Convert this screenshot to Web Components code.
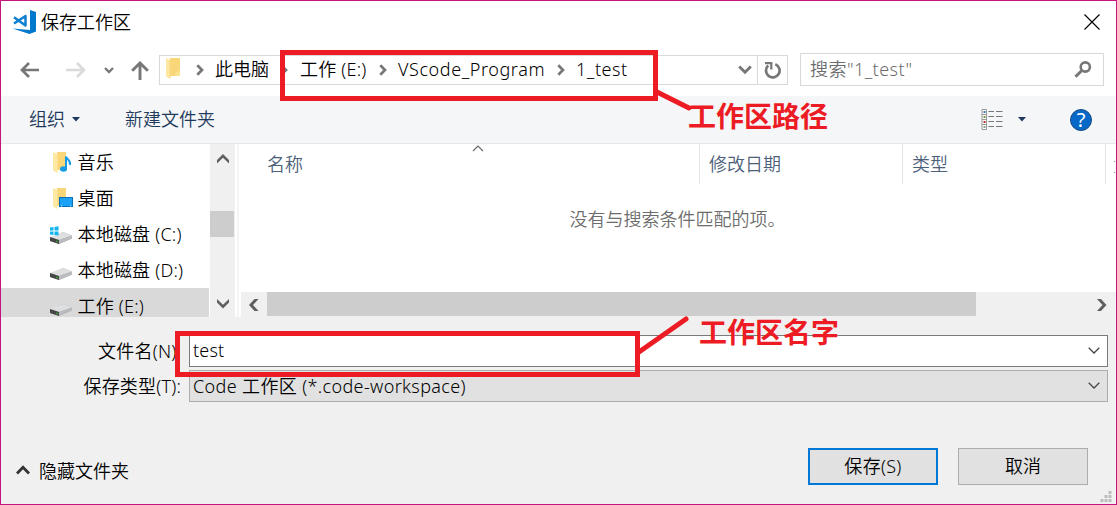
<!DOCTYPE html>
<html lang="zh-CN">
<head>
<meta charset="utf-8">
<title>保存工作区</title>
<style>
html,body{margin:0;height:100%;overflow:hidden}
body{font:350 18px/24px "Noto Sans","Noto Sans CJK SC",sans-serif;color:#000}
</style>
</head>
<body>
<save-dialog></save-dialog>
<script>
const define=(name,css,html)=>customElements.define(name,class extends HTMLElement{
  constructor(){
    super();
    this.attachShadow({mode:'open'}).innerHTML=`<style>*{box-sizing:border-box}svg{display:block;flex:none}${css}</style>${html}`;
  }
});

const icons={
  vscode:['0 0 24 24',`<path d="M18 0L24 2V21.500L17.500 24L.5 18.500L18 20Z" fill="#0078cc"/><path d="M2 7.200L13.500 15.500V6L2 13.500" fill="none" stroke="#0e80d2" stroke-width="2.500" stroke-linejoin="round"/>`],
  close:['0 0 16 16',`<path d="M.5.5L15.500 15.500M15.500.5L.5 15.500" stroke="#000" stroke-width="1.150" fill="none"/>`],
  back:['0 0 20 16',`<path d="M19 8H2M9 1L2 8L9 15" fill="none" stroke="#777" stroke-width="2.700"/>`],
  forward:['0 0 20 16',`<path d="M0 8H18M11 1L18 8L11 15" fill="none" stroke="#dadada" stroke-width="2.600"/>`],
  up:['0 0 18 19',`<path d="M9 19V2M1.200 9.800L9 2L16.800 9.800" fill="none" stroke="#777" stroke-width="2.900"/>`],
  small:['0 0 10 7',`<path d="M1 1L5 5L9 1" fill="none" stroke="#777" stroke-width="2.300"/>`],
  crumb:['0 0 8 12',`<path d="M1.300 1.200L6 6L1.300 10.800" fill="none" stroke="#777" stroke-width="2.700"/>`],
  chevron:['0 0 14 10',`<path d="M1.200 1.500L7 7.300L12.800 1.500" fill="none" stroke="#777" stroke-width="2.900"/>`],
  refresh:['0 0 17 17',`<path d="M4.200 3.600A6.800 6.800 0 1 0 11.300 2.300" fill="none" stroke="#777" stroke-width="2.700"/><path d="M1 1.200H7.300V7.500" fill="none" stroke="#777" stroke-width="2.200"/>`],
  search:['0 0 18 17',`<circle cx="11.300" cy="6" r="4.600" fill="none" stroke="#777" stroke-width="2.600"/><path d="M8 9.300L1.500 15.800" stroke="#777" stroke-width="3"/>`],
  folder:['0 0 15 21',`<path d="M4 0H14V18H4Z" fill="#f9d778"/><path d="M10 15L14 12V18H8Z" fill="#fbe294"/><path d="M0 0L4.500 2V21L0 18.500Z" fill="#ffe9a2"/><path d="M4 2V20" stroke="#f0c75e" stroke-width=".6"/>`],
  music:['0 0 22 22',`<path d="M4 0H13V18H4Z" fill="#f9d778"/><path d="M0 0L4.500 2V21L0 18.500Z" fill="#ffe9a2"/><path d="M13 17V4.500C14 8 18 8 17 13" fill="none" stroke="#169be6" stroke-width="2"/><ellipse cx="10.500" cy="17" rx="3.500" ry="2.700" fill="#169be6"/>`],
  desktop:['0 0 22 22',`<path d="M4 0H13V18H4Z" fill="#f9d778"/><path d="M0 0L4.500 2V21L0 18.500Z" fill="#ffe9a2"/><rect x="6.500" y="9.500" width="13" height="9" fill="#1ba1f5" stroke="#086fb9"/><path d="M8 18H18" stroke="#dff4ff" stroke-dasharray="1 8"/>`],
  drive:['0 0 22 12',`<path d="M0 6L13 0L22 3.500V6.500L9 12L0 9Z" fill="#a9abad"/><path d="M0 5L13 0L22 3.500L9 8Z" fill="#dedfe1"/><path d="M0 5L9 8V12L0 9Z" fill="#454746"/><path d="M9 8L22 3.500V6.500L9 12Z" fill="#b9bbbd"/><path d="M6 8.500L8 9.200V10.500L6 10Z" fill="#38a03d"/>`],
  winDrive:['0 0 22 18',`<path d="M0 12L13 6L22 9.500V12.500L9 18L0 15Z" fill="#a9abad"/><path d="M0 11L13 6L22 9.500L9 14Z" fill="#dedfe1"/><path d="M0 11L9 14V18L0 15Z" fill="#454746"/><path d="M9 14L22 9.500V12.500L9 18Z" fill="#b9bbbd"/><path d="M6 14.500L8 15.200V16.500L6 16Z" fill="#38a03d"/><path d="M0 1.500L3.500 1V4.500H0ZM4.500.9L8.500.3V4.500H4.500ZM0 5.500H3.500V9L0 8.500ZM4.500 5.500H8.500V9.500L4.500 9Z" fill="#10b5ef"/>`],
  caret:['0 0 8 5',`<path d="M0 0H8L4 4.500Z" fill="#1e395b"/>`],
  list:['0 0 22 22',`<path d="M1 .5H5.500V20.500H1ZM1 5.500H5.500M1 10.500H5.500M1 15.500H5.500" fill="#fff" stroke="#999"/><path d="M2.500 3H4.500" stroke="#247bc2" stroke-width="2"/><path d="M2.500 8H4.500" stroke="#7b9140" stroke-width="2"/><path d="M2.500 13H4.500" stroke="#c42722" stroke-width="2"/><path d="M2.500 18H4.500" stroke="#89a789" stroke-width="2"/><path d="M7.500 2.500H13M15 2.500H21.500M7.500 7.500H13M15 7.500H21.500M7.500 12.500H13M15 12.500H21.500M7.500 17.500H13M15 17.500H21.500" stroke="#777"/>`],
  sort:['0 0 12 7',`<path d="M1 6L6 1L11 6" fill="none" stroke="#666" stroke-width="1.100"/>`],
  combo:['0 0 12 7',`<path d="M.7.8L6 6L11.300.8" fill="none" stroke="#444" stroke-width="1.250"/>`],
  scrollUp:['0 0 12 10',`<path d="M0 6L6 0L12 6V9.500L6 3.800L0 9.500Z" fill="#606060"/>`],
  scrollDown:['0 0 12 10',`<path d="M0 0V3.500L6 9.500L12 3.500V0L6 5.700Z" fill="#606060"/>`],
  scrollLeft:['0 0 10 12',`<path d="M5.500 0L0 6L5.500 12H9.500L4 6L9.500 0Z" fill="#606060"/>`],
  scrollRight:['0 0 10 12',`<path d="M0 0H4L9.500 6L4 12H0L5.500 6Z" fill="#606060"/>`],
  hide:['0 0 14 10',`<path d="M1 8.500L7 2.300L13 8.500" fill="none" stroke="#333" stroke-width="2.800"/>`],
  grip:['0 0 12 12',`<path d="M8.500 0H11.500V3H8.500ZM8.500 4H11.500V7H8.500ZM8.500 8H11.500V11H8.500ZM4.500 4H7.500V7H4.500ZM4.500 8H7.500V11H4.500ZM.5 8H3.500V11H.5Z" fill="#bdbdbd"/>`]
};
customElements.define('ui-icon',class extends HTMLElement{
  constructor(){super();this.attachShadow({mode:'open'});}
  connectedCallback(){
    const [box,body]=icons[this.getAttribute('name')],[,,w,h]=box.split(' ');
    this.shadowRoot.innerHTML=`<style>:host{display:block;flex:none;width:${w}px;height:${h}px}svg{display:block}</style><svg width="${w}" height="${h}" viewBox="${box}">${body}</svg>`;
  }
});

define('title-bar',`:host{display:flex;height:43px;padding:8px 16px 0 11px;align-items:flex-start}
  ui-icon[name=vscode]{margin-top:1px}.t{margin:1px 0 0 5px;flex:1}ui-icon[name=close]{margin-top:5px}`,
  `<ui-icon name="vscode"></ui-icon><span class="t"><slot></slot></span><ui-icon name="close"></ui-icon>`);

define('nav-bar',`:host{display:flex;height:52px;padding:0 12px 0 19px;align-items:flex-start}
  .arrows{display:flex;align-items:center;height:52px;width:139px}
  .f{margin-left:26px}.s{margin-left:18px}.u{margin:1px 0 0 17px}
  .addr{display:flex;width:629px;height:30px;margin-top:11px;border:1px solid #d9d9d9;align-items:center}
  .addr>*{flex:none}.addr>.fold{margin:-3px 0 0 6px}
  .addr>.path{display:flex;align-items:center;flex:1 1 0}.path span{line-height:28px;margin-top:-2px;white-space:nowrap;flex:none}
  .re{display:flex;width:30px;height:28px;border-left:1px solid #d9d9d9;align-items:center;justify-content:center;margin-left:5px}
  .find{display:flex;width:304px;height:33px;margin:9px 0 0 12px;border:1px solid #d9d9d9;align-items:center;justify-content:space-between;padding:0 11px 0 9px;color:#6d6d6d}.find span{margin-top:-1px;letter-spacing:.45px}`,
  `<div class="arrows"><ui-icon name="back"></ui-icon><ui-icon class="f" name="forward"></ui-icon><ui-icon class="s" name="small"></ui-icon><ui-icon class="u" name="up"></ui-icon></div>
   <div class="addr"><ui-icon class="fold" name="folder"></ui-icon><div class="path">
   <ui-icon name="crumb" style="margin-left:15px"></ui-icon><span style="margin-left:11px;width:54px">此电脑</span>
   <ui-icon name="crumb" style="margin-left:11px"></ui-icon><span style="margin-left:12px;width:67px;letter-spacing:.2px">工作 (E:)</span>
   <ui-icon name="crumb" style="margin-left:12px"></ui-icon><span style="margin-left:11px;width:147px;letter-spacing:.58px">VScode_Program</span>
   <ui-icon name="crumb" style="margin-left:12px"></ui-icon><span style="margin-left:11px;letter-spacing:.55px">1_test</span></div>
   <ui-icon name="chevron"></ui-icon><div class="re"><ui-icon name="refresh"></ui-icon></div></div>
   <div class="find"><span>搜索"1_test"</span><ui-icon name="search"></ui-icon></div>`);

define('tool-bar',`:host{display:flex;height:48px;background:#f4f6f8;border-bottom:1px solid #e5e7e9;align-items:center;padding:0 24px 0 28px;color:#1e395b}
  span{margin-top:-2px}.n{margin-left:45px;flex:1}.c{margin-left:7px}.help{width:22px;height:22px;border-radius:50%;background:#0669c7;border:1px solid #164a86;color:#fff;text-align:center;font-size:20px;line-height:20px;font-weight:400;margin:0 0 0 44px}`,
  `<span>组织</span><ui-icon class="c" name="caret"></ui-icon><span class="n">新建文件夹</span><ui-icon name="list"></ui-icon><ui-icon name="caret" style="margin-left:15px"></ui-icon><span class="help">?</span>`);

define('tree-item',`:host{display:flex;flex:none;height:36px;align-items:center;padding-left:49px}:host([selected]){background:#d9d9d9}
  .i{width:28px;display:flex;flex:none}.t{white-space:nowrap;letter-spacing:.2px;margin-left:-.5px}::slotted(ui-icon){margin-top:2px}`,
  `<span class="i"><slot name="icon"></slot></span><span class="t"><slot></slot></span>`);

define('folder-tree',`:host{display:flex;width:238px;height:173px;overflow:hidden;flex:none}
  .items{width:208px;height:173px;overflow:hidden;flex:none}
  .bar{display:flex;flex:none;flex-direction:column;align-items:center;width:25px;margin-left:1px;background:#f0f0f0;padding:10px 0 8px}
  .thumb{width:24px;height:26px;background:#cdcdcd;margin:47px 1px 0 0}.down{margin-top:auto}
  .split{width:2px;background:#f4f4f4;margin-left:2px;flex:none}`,
  `<div class="items"><slot></slot></div><div class="bar"><ui-icon name="scrollUp"></ui-icon><div class="thumb"></div><ui-icon class="down" name="scrollDown"></ui-icon></div><div class="split"></div>`);

define('file-list',`:host{display:flex;flex-direction:column;flex:1;min-width:0;padding-left:2px;background:#fff}
  .head{display:grid;grid-template-columns:459px 203px 203px 1fr;height:40px;color:#4c607a}
  .head div{display:flex;align-items:center;padding:0 0 0 9px;border-right:1px solid #e2e3e5}.head .name{padding-left:26px}
  .head .name ui-icon{margin:-31px 0 0 169px}.head .last{display:block;border:0;padding:17px 0 0 8px}
  .empty{text-align:center;color:#6d6d6d;height:108px;padding:23px 2px 0 0}
  .bar{display:flex;height:25px;background:#f0f0f0;align-items:center}.thumb{width:709px;height:24px;background:#cdcdcd;align-self:flex-start;margin-left:8px}`,
  `<div class="head"><div class="name">名称<ui-icon name="sort"></ui-icon></div><div>修改日期</div><div>类型</div><div class="last"><svg width="1" height="12"><path d="M0 .5H1M0 11.500H1" stroke="#8591a1"/></svg></div></div>
   <div class="empty"><slot></slot></div><div class="bar"><ui-icon name="scrollLeft" style="margin-left:8px"></ui-icon><div class="thumb"></div><ui-icon name="scrollRight" style="margin-left:auto;margin-right:9px"></ui-icon></div>`);

define('form-field',`:host{display:flex;height:32px}
  .l{width:188px;text-align:right;padding-right:8px;line-height:33px;white-space:nowrap;letter-spacing:.2px}
  .box{display:flex;width:919px;height:32px;align-items:center;justify-content:space-between;padding:0 7px 1px 3px;background:#fff;border:1px solid #7a7a7a}
  .box span{margin-top:-1px;letter-spacing:.2px}
  :host([kind=select]) .box{background:#e1e1e1;border-color:#adadad}:host([kind=select]) .box span{margin-top:1px;letter-spacing:.36px}`,
  `<span class="l"><slot name="label"></slot></span><div class="box"><span><slot></slot></span><ui-icon name="combo"></ui-icon></div>`);

define('push-button',`:host{display:block;width:130px;height:37px}button{width:100%;height:100%;font:inherit;color:inherit;padding:0 0 1px;background:#e1e1e1;border:1px solid #adadad}:host([primary]) button{border:2px solid #0078d7;letter-spacing:.3px}`,
  `<button><slot></slot></button>`);

define('dialog-footer',`:host{display:flex;flex-direction:column;flex:1;background:#f0f0f0;padding-top:18px}
  .fields{display:flex;flex-direction:column;gap:3px}.actions{display:flex;margin-top:46px;padding:0 28px 0 15px;gap:20px}
  .hide{display:flex;align-items:center;gap:9px;flex:1;padding-top:8px}.grip{margin:6px 4px 0 auto}`,
  `<div class="fields"><slot name="field"></slot></div><div class="actions"><span class="hide"><ui-icon name="hide" style="margin-top:-1px"></ui-icon><span><slot name="toggle"></slot></span></span><slot name="action"></slot></div><ui-icon class="grip" name="grip"></ui-icon>`);

define('red-markup',`:host{position:absolute;inset:0;pointer-events:none;color:#ed1c24;font:700 28px/36px "Noto Sans CJK SC",sans-serif}
  svg{position:absolute;inset:0}span{position:absolute;white-space:nowrap}.a{left:688px;top:97px}.b{left:699px;top:313px}`,
  `<svg width="1117" height="505" fill="none" stroke="#ed1c24" stroke-width="5"><path d="M282.500 52.500H655.500V98.500H282.500Z"/><path d="M657 92L689 108M639 352L686 319" stroke-linecap="round"/><path d="M177.500 333.500H637.500V374.500H177.500Z"/></svg><span class="a">工作区路径</span><span class="b">工作区名字</span>`);

define('save-dialog',`:host{display:flex;flex-direction:column;position:relative;width:1117px;height:505px;box-sizing:border-box;border:1px solid #c4157f;background:#fff;overflow:hidden}
  .main{display:flex;height:173px}red-markup{left:-1px;top:-1px}`,
  `<title-bar>保存工作区</title-bar><nav-bar></nav-bar><tool-bar></tool-bar>
  <div class="main"><folder-tree>
    <tree-item><ui-icon slot="icon" name="music" style="margin-left:3px"></ui-icon>音乐</tree-item>
    <tree-item><ui-icon slot="icon" name="desktop" style="margin-left:3px"></ui-icon>桌面</tree-item>
    <tree-item><ui-icon slot="icon" name="winDrive"></ui-icon>本地磁盘 (C:)</tree-item>
    <tree-item><ui-icon slot="icon" name="drive" style="margin-top:8px"></ui-icon>本地磁盘 (D:)</tree-item>
    <tree-item selected><ui-icon slot="icon" name="drive" style="margin-top:8px"></ui-icon>工作 (E:)</tree-item>
  </folder-tree><file-list>没有与搜索条件匹配的项。</file-list></div>
  <dialog-footer>
    <form-field slot="field"><span slot="label">文件名(N):</span>test</form-field>
    <form-field slot="field" kind="select"><span slot="label">保存类型(T):</span>Code 工作区 (*.code-workspace)</form-field>
    <span slot="toggle">隐藏文件夹</span>
    <push-button slot="action" primary>保存(S)</push-button><push-button slot="action">取消</push-button>
  </dialog-footer><red-markup></red-markup>`);
</script>
</body>
</html>
